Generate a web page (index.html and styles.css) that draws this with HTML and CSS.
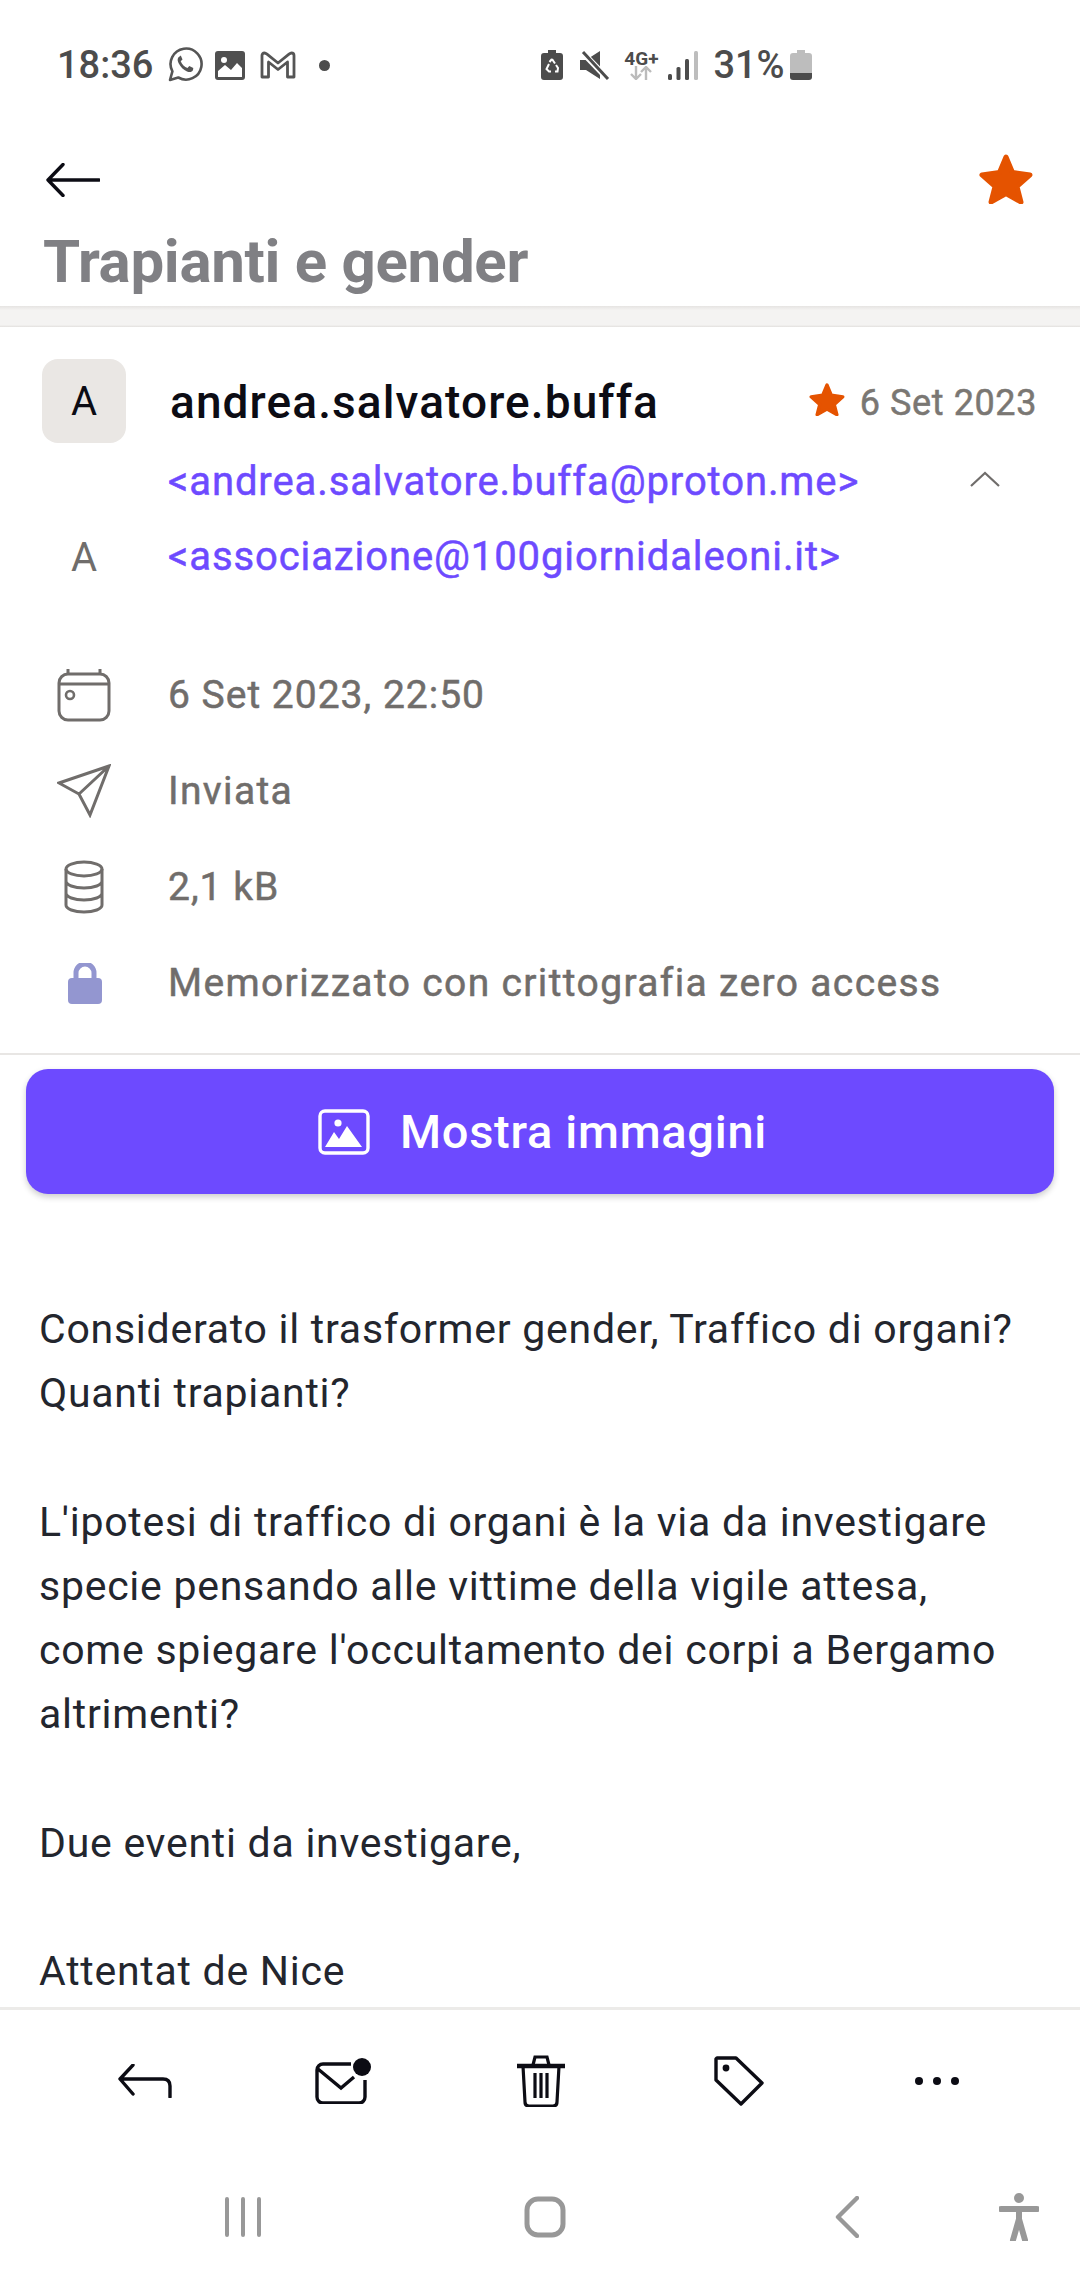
FILE: index.html
```html
<!DOCTYPE html>
<html lang="it">
    <head>
        <meta charset="UTF-8">
        <title>Trapianti e gender</title>
        <link rel="stylesheet" href="styles.css">
    </head>

    <body>
        <div class="page">
            <div class="status">
                <span class="clock">18:36</span>
                <svg class="st_whatsapp" width="36" height="36" viewBox="0 0 36 36"><path d="M3 33l2.400-8.600A15.500 15.500 0 1 1 11.300 30.500z" fill="none" stroke="#555" stroke-width="2.600" stroke-linejoin="round"/><path d="M12.500 9.500c-2 1-2.500 3.500-1 6.500 2 4 5 7 8.500 8.500 3 1.200 5 .5 6-1.500l.3-2-4-2-1.800 2c-3-1-5.500-3.500-6.800-6.800l1.800-1.700-1.700-4z" fill="#555"/></svg>
                <svg class="st_image" width="30" height="29" viewBox="0 0 30 29"><path d="M3 0h24a3 3 0 0 1 3 3v23a3 3 0 0 1-3 3H3a3 3 0 0 1-3-3V3a3 3 0 0 1 3-3z" fill="#505050"/><circle cx="9" cy="9" r="3" fill="#fff"/><path d="M3 26v-6l7-6 6 5 6-7 5 5v9z" fill="#fff"/></svg>
                <svg class="st_gmail" width="36" height="28" viewBox="0 0 36 28"><path d="M2 26V4.500q0-2.500 2.500-2.500 1 0 2.500 1.200L18 12 29 3.200Q30.500 2 31.500 2 34 2 34 4.500V26h-6.500V11L18 18.500 8.500 11v15z" fill="none" stroke="#555" stroke-width="2.800" stroke-linejoin="round"/></svg>
                <span class="st_dot"></span>
                <svg class="st_saver" width="22" height="30" viewBox="0 0 22 30"><path d="M7 0h8v3h4a3 3 0 0 1 3 3v21a3 3 0 0 1-3 3H3a3 3 0 0 1-3-3V6a3 3 0 0 1 3-3h4z" fill="#4c4c4c"/><path d="M11 9l3 4.500M8 14l-2.500 5 2.500 2.500h2M14 21.500h2.500L17 18l-2-3M8.500 12L11 9" fill="none" stroke="#fff" stroke-width="2"/></svg>
                <svg class="st_mute" width="30" height="30" viewBox="0 0 30 30"><path d="M0 10h6L20 1v28L6 20H0z" fill="#4c4c4c"/><path d="M3 3l26 27" stroke="#fff" stroke-width="6"/><path d="M3 2l25 27" stroke="#4c4c4c" stroke-width="3"/></svg>
                <div class="st_net">
                    <span class="st_4g">4G+</span>
                    <svg width="22" height="14" viewBox="0 0 22 14"><path d="M6 0v12M1 8l5 5 5-5" fill="none" stroke="#bbb" stroke-width="2.400"/><path d="M16 14V2M11 6l5-5 5 5" fill="none" stroke="#bbb" stroke-width="2.400"/></svg>
                </div>
                <svg class="st_signal" width="30" height="29" viewBox="0 0 30 29"><rect x="0" y="23" width="4" height="6" rx="1.500" fill="#4c4c4c"/><rect x="8.500" y="16" width="4" height="13" rx="1.500" fill="#4c4c4c"/><rect x="17" y="8" width="4" height="21" rx="1.500" fill="#4c4c4c"/><rect x="26" y="0" width="4" height="29" rx="1.500" fill="#bdbdbd"/></svg>
                <span class="st_pct">31%</span>
                <svg class="st_batt" width="22" height="30" viewBox="0 0 22 30"><path d="M7 0h8v3h4a3 3 0 0 1 3 3v18H0V6a3 3 0 0 1 3-3h4z" fill="#bdbdbd"/><path d="M0 23h22v4a3 3 0 0 1-3 3H3a3 3 0 0 1-3-3z" fill="#4c4c4c"/></svg>
            </div>

            <div class="topbar">
                <div class="topbar_row">
                    <svg class="back" width="54" height="34" viewBox="0 0 54 34"><path d="M53 17H2M17 1.500L2 17l15 15.500" fill="none" stroke="#0c0c14" stroke-width="3.400" stroke-linecap="round" stroke-linejoin="round"/></svg>
                    <svg width="54" height="50" viewBox="0 0 54 50"><path d="M27 3l6.500 15.500L51 21 38 32.500 42 48 27 39.500 12 48l4-15.500L3 21l17.500-2.500z" fill="#e55300" stroke="#e55300" stroke-width="5" stroke-linejoin="round"/></svg>
                </div>
                <h1 class="title">Trapianti e gender</h1>
            </div>
            <div class="shadow_band"></div>

            <div class="head">
                <div class="sender_row">
                    <div class="avatar">A</div>
                    <div class="sender_name">andrea.salvatore.buffa</div>
                    <svg class="mini_star" width="36" height="33" viewBox="0 0 54 50"><path d="M27 3l6.500 15.500L51 21 38 32.500 42 48 27 39.500 12 48l4-15.500L3 21l17.500-2.500z" fill="#e55300" stroke="#e55300" stroke-width="5" stroke-linejoin="round"/></svg>
                    <div class="sender_date">6 Set 2023</div>
                </div>
                <div class="addr_row">
                    <div class="addr_side"></div>
                    <div class="addr">&lt;andrea.salvatore.buffa@proton.me&gt;</div>
                    <svg class="chevron" width="32" height="16" viewBox="0 0 32 16"><path d="M2 15L16 2l14 13" fill="none" stroke="#706d6b" stroke-width="2.200"/></svg>
                </div>
                <div class="addr_row second">
                    <div class="addr_side">A</div>
                    <div class="addr">&lt;associazione@100giornidaleoni.it&gt;</div>
                </div>
            </div>

            <div class="details">
                <div class="detail digits">
                    <div class="detail_icon"><svg width="54" height="54" viewBox="0 0 54 54"><rect x="2" y="6" width="50" height="46" rx="9" fill="none" stroke="#706d6b" stroke-width="3"/><path d="M2 16h50M11 1v5M43 1v5" fill="none" stroke="#706d6b" stroke-width="3"/><circle cx="13" cy="27" r="4" fill="none" stroke="#706d6b" stroke-width="2.600"/></svg></div>
                    <span>6 Set 2023, 22:50</span>
                </div>
                <div class="detail">
                    <div class="detail_icon"><svg width="54" height="54" viewBox="0 0 54 54"><path d="M52 2L2 19l20 11 11 21zM52 2L22 30" fill="none" stroke="#706d6b" stroke-width="3" stroke-linejoin="miter"/></svg></div>
                    <span>Inviata</span>
                </div>
                <div class="detail digits">
                    <div class="detail_icon"><svg width="40" height="54" viewBox="0 0 40 54"><ellipse cx="20" cy="9" rx="18" ry="7" fill="none" stroke="#706d6b" stroke-width="3"/><path d="M2 9v36c0 4 8 7 18 7s18-3 18-7V9M2 21c0 4 8 7 18 7s18-3 18-7M2 33c0 4 8 7 18 7s18-3 18-7" fill="none" stroke="#706d6b" stroke-width="3"/></svg></div>
                    <span>2,1 kB</span>
                </div>
                <div class="detail">
                    <div class="detail_icon lock"><svg width="34" height="41" viewBox="0 0 34 41"><path d="M8 17v-7a9 9 0 0 1 18 0v7" fill="none" stroke="#9396d0" stroke-width="5"/><rect x="0" y="15" width="34" height="26" rx="4" fill="#9396d0"/></svg></div>
                    <span>Memorizzato con crittografia zero access</span>
                </div>
            </div>

            <div class="rule"></div>

            <div class="images_btn">
                <svg width="52" height="46" viewBox="0 0 52 46"><rect x="2" y="2" width="48" height="42" rx="5" fill="none" stroke="#fff" stroke-width="3.400"/><circle cx="20" cy="14" r="3.600" fill="#fff"/><path d="M7 38l9-15 5 7 8-13 15 21z" fill="#fff"/></svg>
                <span>Mostra immagini</span>
            </div>

            <div class="mail_body">
                <p>Considerato il trasformer gender, Traffico di organi?<br>Quanti trapianti?</p>
                <p>L'ipotesi di traffico di organi è la via da investigare<br>specie pensando alle vittime della vigile attesa,<br>come spiegare l'occultamento dei corpi a Bergamo<br>altrimenti?</p>
                <p>Due eventi da investigare,</p>
                <p>Attentat de Nice</p>
            </div>

            <div class="actions">
                <div class="action"><svg width="54" height="34" viewBox="0 0 54 34"><path d="M52 33V22q0-7-7-7H3M15 1L2 15l13 15" fill="none" stroke="#0c0c14" stroke-width="3.400" stroke-linecap="round" stroke-linejoin="round"/></svg></div>
                <div class="action"><svg width="56" height="46" viewBox="0 0 56 46"><path d="M36 6H8a6 6 0 0 0-6 6v27a6 6 0 0 0 6 6h36a6 6 0 0 0 6-6V22M3 11l23 19 13-11" fill="none" stroke="#0c0c14" stroke-width="3.400"/><circle cx="47" cy="9" r="9" fill="#0c0c14"/></svg></div>
                <div class="action"><svg width="48" height="52" viewBox="0 0 48 52"><path d="M0 11h48" stroke="#0c0c14" stroke-width="4.500"/><path d="M16 10l2-8h12l2 8M6 11l2 36q0 4 4 4h24q4 0 4-4l2-36M18 18v25M24 18v25M30 18v25" fill="none" stroke="#0c0c14" stroke-width="3.200"/></svg></div>
                <div class="action"><svg width="50" height="50" viewBox="0 0 50 50"><path d="M3 2h19L48 27 27 48 2 24V3z" fill="none" stroke="#0c0c14" stroke-width="3.400" stroke-linejoin="round"/><circle cx="12" cy="12" r="3.400" fill="#0c0c14"/></svg></div>
                <div class="action"><svg width="46" height="10" viewBox="0 0 46 10"><circle cx="5" cy="5" r="4" fill="#0c0c14"/><circle cx="23" cy="5" r="4" fill="#0c0c14"/><circle cx="41" cy="5" r="4" fill="#0c0c14"/></svg></div>
            </div>

            <div class="navbar">
                <div class="nav_item"><svg width="38" height="40" viewBox="0 0 38 40"><path d="M3 2v36M19 2v36M35 2v36" stroke="#989898" stroke-width="4" stroke-linecap="round"/></svg></div>
                <div class="nav_item"><svg width="42" height="42" viewBox="0 0 42 42"><rect x="3" y="3" width="36" height="36" rx="11" fill="none" stroke="#989898" stroke-width="5"/></svg></div>
                <div class="nav_item"><svg width="24" height="42" viewBox="0 0 24 42"><path d="M22 2L3 21l19 19" fill="none" stroke="#989898" stroke-width="4.400" stroke-linecap="round" stroke-linejoin="round"/></svg></div>
                <div class="nav_item"><svg width="40" height="48" viewBox="0 0 40 48"><circle cx="20" cy="5" r="5" fill="#989898"/><path d="M2 16h36M20 16v11M20 26l-6 21M20 26l6 21" fill="none" stroke="#989898" stroke-width="6" stroke-linecap="round"/></svg></div>
            </div>
        </div>
    </body>
</html>
```

FILE: styles.css
```css
*{
    box-sizing: border-box;
}
body {
    margin: 0;
    background-color: white;
    overflow: hidden;
    font-family: Roboto, sans-serif;
}
.page{
    display: flex;
    flex-direction: column;
    width: 1080px;
    height: 2280px;
    background-color: white;
    overflow: hidden;
}
svg{
    display: block;
    flex-shrink: 0;
}

/* status bar */
.status{
    display: flex;
    align-items: center;
    height: 130px;
    padding-left: 57px;
}
.clock, .st_pct{
    font-size: 38px;
    font-weight: 500;
    color: #4c4c4c;
}
.st_whatsapp{ margin-left: 14px; }
.st_image{ margin-left: 12px; }
.st_gmail{ margin-left: 15px; }
.st_dot{
    width: 11px;
    height: 11px;
    margin-left: 23px;
    border-radius: 50%;
    background-color: #4c4c4c;
}
.st_saver{ margin-left: 211px; }
.st_mute{ margin-left: 17px; }
.st_net{
    display: flex;
    flex-direction: column;
    align-items: center;
    width: 32px;
    margin-left: 15px;
}
.st_4g{
    font-size: 19px;
    line-height: 15px;
    font-weight: 700;
    color: #4c4c4c;
}
.st_signal{ margin-left: 11px; }
.st_pct{ margin-left: 15px; }
.st_batt{ margin-left: 5px; }

/* title area */
.topbar{
    height: 176px;
    padding: 24px 47px 0 43px;
}
.topbar_row{
    display: flex;
    justify-content: space-between;
    align-items: center;
    height: 50px;
}
.back{
    margin: 2px 0 0 3px;
}
.title{
    margin: 25px 0 0;
    font-size: 60px;
    line-height: 66px;
    font-weight: 700;
    letter-spacing: -0.3px;
    color: #808084;
}
.shadow_band{
    height: 21px;
    background: linear-gradient(#e6e4e2, #f4f3f2 20%, #f4f3f2 90%, #e2e0de);
}

/* sender */
.head{
    padding: 32px 42px 0;
}
.sender_row{
    display: flex;
    align-items: center;
    height: 84px;
}
.avatar{
    display: flex;
    justify-content: center;
    align-items: center;
    width: 84px;
    height: 84px;
    border-radius: 16px;
    background-color: #eae7e4;
    font-size: 40px;
    color: #0c0c14;
}
.sender_name{
    flex: 1;
    margin-left: 44px;
    padding-top: 2px;
    font-size: 46px;
    font-weight: 500;
    letter-spacing: 1.100px;
    color: #0c0c14;
}
.mini_star{ margin-top: -4px; }
.sender_date{
    margin-left: 15px;
    margin-right: 1px;
    padding-top: 3px;
    font-size: 36px;
    letter-spacing: 0.600px;
    -webkit-text-stroke: 0.5px #7a7773;
    color: #7a7773;
}
.addr_row{
    display: flex;
    align-items: center;
    height: 64px;
    margin-top: 7px;
}
.addr_row.second{
    margin-top: 11px;
}
.addr_side{
    width: 126px;
    padding-right: 42px;
    text-align: center;
    font-size: 40px;
    color: #706d6b;
}
.addr{
    flex: 1;
    margin-top: -2px;
    font-size: 40px;
    letter-spacing: 0.900px;
    -webkit-text-stroke: 0.5px #6d4aff;
    color: #6d4aff;
}
.chevron{
    margin: -6px 37px 0 0;
}

/* details */
.details{
    margin-top: 58px;
}
.detail{
    display: flex;
    align-items: center;
    height: 96px;
    font-size: 39px;
    letter-spacing: 1.350px;
    -webkit-text-stroke: 0.5px #706d6b;
    color: #706d6b;
}
.detail.digits{
    letter-spacing: 1px;
}
.detail_icon{
    display: flex;
    justify-content: center;
    width: 168px;
}
.detail_icon.lock{
    padding-left: 2px;
}
.rule{
    flex-shrink: 0;
    height: 2px;
    margin-top: 22px;
    background-color: #e8e6e4;
}

/* button */
.images_btn{
    flex-shrink: 0;
    display: flex;
    justify-content: center;
    align-items: center;
    gap: 30px;
    height: 125px;
    margin: 14px 26px 0;
    padding-left: 5px;
    border-radius: 22px;
    background-color: #6d4aff;
    box-shadow: 0 3px 6px rgba(0, 0, 0, 0.2);
    font-size: 47px;
    font-weight: 500;
    letter-spacing: 0.700px;
    color: white;
}

/* message text */
.mail_body{
    flex: 1;
    min-height: 0;
    overflow: hidden;
    padding: 103px 39px 0;
    font-size: 41px;
    line-height: 64.200px;
    letter-spacing: 0.740px;
    color: #23262e;
}
.mail_body p{
    margin: 0 0 64.200px;
}

/* bottom bars */
.actions{
    flex-shrink: 0;
    display: grid;
    grid-template-columns: repeat(5, 198px);
    align-items: center;
    height: 139px;
    padding: 6px 0 0 46px;
    border-top: 3px solid #ecebe9;
}
.action{
    display: flex;
    justify-content: center;
}
.navbar{
    flex-shrink: 0;
    display: grid;
    grid-template-columns: 302px 302px 302px 42px;
    align-items: center;
    height: 134px;
    padding: 8px 0 0 92px;
}
.nav_item{
    display: flex;
    justify-content: center;
}
```
